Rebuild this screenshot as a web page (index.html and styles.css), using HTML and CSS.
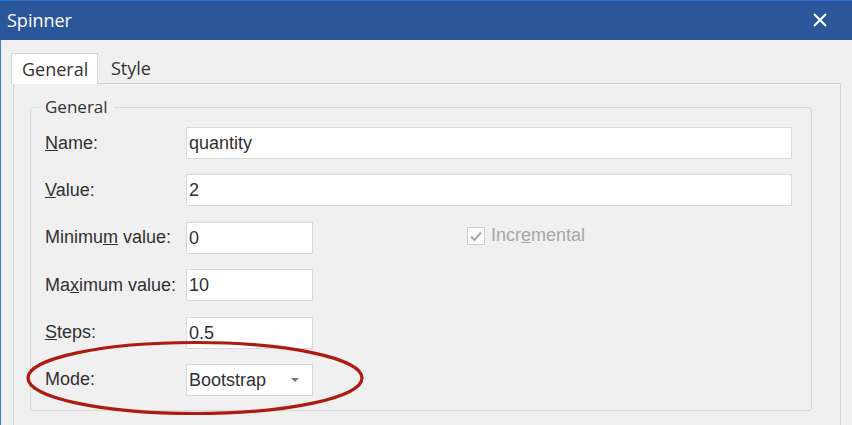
FILE: index.html
```html
<!DOCTYPE html>
<html lang="en">
<head>
    <meta charset="UTF-8">
    <meta name="viewport" content="width=device-width, initial-scale=1.0">
    <title>Spinner</title>
    <link rel="stylesheet" href="styles.css">
</head>
<body>
    <div class="window">
        <div class="titlebar">
            <span class="title">Spinner</span>
            <svg class="close" width="14" height="14" viewBox="0 0 14 14">
                <path d="M1 1 L13 13 M13 1 L1 13" stroke="#fff" stroke-width="2" fill="none"/>
            </svg>
        </div>

        <div class="client">
            <div class="tabs">
                <div class="tab active">General</div>
                <div class="tab">Style</div>
            </div>

            <div class="panel">
                <fieldset class="group">
                    <legend>General</legend>

                    <div class="row">
                        <label class="label"><u>N</u>ame:</label>
                        <div class="input wide">quantity</div>
                    </div>
                    <div class="row">
                        <label class="label"><u>V</u>alue:</label>
                        <div class="input wide">2</div>
                    </div>
                    <div class="row">
                        <label class="label">Minimu<u>m</u> value:</label>
                        <div class="input">0</div>
                        <div class="check">
                            <span class="box">
                                <svg width="14" height="14" viewBox="0 0 14 14">
                                    <path d="M2 7.5 L5.5 11 L12 3.5" stroke="#a8a8a8" stroke-width="2" fill="none"/>
                                </svg>
                            </span>
                            <span>Incr<u>e</u>mental</span>
                        </div>
                    </div>
                    <div class="row">
                        <label class="label">Ma<u>x</u>imum value:</label>
                        <div class="input">10</div>
                    </div>
                    <div class="row">
                        <label class="label"><u>S</u>teps:</label>
                        <div class="input">0.5</div>
                    </div>
                    <div class="row">
                        <label class="label">Mode:</label>
                        <div class="input select">
                            <span>Bootstrap</span>
                            <span class="arrow"></span>
                        </div>
                    </div>
                </fieldset>
            </div>
        </div>

        <!-- red highlight drawn over the Mode row -->
        <svg class="highlight" width="852" height="425" viewBox="0 0 852 425">
            <ellipse cx="195" cy="378" rx="167" ry="35.5" fill="none" stroke="#ad1a10" stroke-width="3.2"/>
        </svg>
    </div>
</body>
</html>
```

FILE: styles.css
```css
body {
    margin: 0;
    background: #f0f0f0;
    font-family: "Liberation Sans", Arial, sans-serif;
    font-size: 18px;
    color: #303030;
    overflow: hidden;
}
.window {
    position: relative;
    width: 852px;
    height: 425px;
    background: #f0f0f0;
    overflow: hidden;
}
.titlebar {
    height: 40px;
    box-sizing: border-box;
    border-top: 1px solid #2470d3;
    background: #2b579a;
    display: flex;
    align-items: center;
    justify-content: space-between;
    padding: 0 25px 0 7px;
}
.title {
    font-family: "Open Sans", sans-serif;
    font-size: 18px;
    color: #fff;
    margin-top: -2px;
}
.close {
    display: block;
    margin-top: -1px;
}
.client {
    border-left: 1px solid #3b7fd4;
    height: 385px;
    box-sizing: border-box;
    padding: 13px 0 0 10px;
}
.tabs {
    display: flex;
    align-items: flex-end;
    height: 30px;
    position: relative;
    z-index: 1;
}
.tab {
    font-family: "Open Sans", sans-serif;
    font-size: 18px;
    color: #333;
    height: 29px;
    line-height: 28px;
    padding: 0 12px 0 13px;
    box-sizing: border-box;
}
.tab.active {
    height: 31px;
    line-height: 31px;
    margin-bottom: -1px;
    background: #fff;
    border: 1px solid #d4d4d4;
    border-bottom: none;
    padding: 0 9px 0 10px;
    width: 87px;
}
.panel {
    margin: 0 11px 0 2px;
    border: 1px solid #d4d4d4;
    border-bottom: none;
    height: 360px;
    box-sizing: border-box;
    padding: 13px 28px 0 16px;
}
.group {
    margin: 0;
    border: 1px solid #dadada;
    border-radius: 3px;
    padding: 10px 19px 14px 14px;
    min-width: 0;
}
.group legend {
    font-family: "Open Sans", sans-serif;
    font-size: 17px;
    line-height: 20px;
    color: #333;
    padding: 0 6px;
    margin-left: -6px;
}
.row {
    display: flex;
    align-items: center;
    height: 32px;
    margin-bottom: 15.4px;
}
.row:last-child {
    margin-bottom: 0;
}
.label {
    width: 141px;
    flex: none;
}
.input {
    width: 127px;
    height: 32px;
    box-sizing: border-box;
    background: #fff;
    border: 1px solid #d9d9d9;
    padding: 0 4px 0 2px;
    line-height: 30px;
    flex: none;
}
.input.wide {
    flex: 1;
    width: auto;
}
.select {
    display: flex;
    align-items: center;
    justify-content: space-between;
    padding-right: 13px;
}
.arrow {
    width: 0;
    height: 0;
    border-left: 4px solid transparent;
    border-right: 4px solid transparent;
    border-top: 4px solid #777;
}
.check {
    display: flex;
    align-items: center;
    margin-left: 154px;
    margin-top: -4px;
    color: #a6a6a6;
}
.box {
    width: 18px;
    height: 18px;
    box-sizing: border-box;
    border: 1px solid #cfcfcf;
    background: #fff;
    display: flex;
    align-items: center;
    justify-content: center;
    margin-right: 6px;
}
.box svg {
    display: block;
}
.highlight {
    position: absolute;
    left: 0;
    top: 0;
    pointer-events: none;
    z-index: 2;
}
```
